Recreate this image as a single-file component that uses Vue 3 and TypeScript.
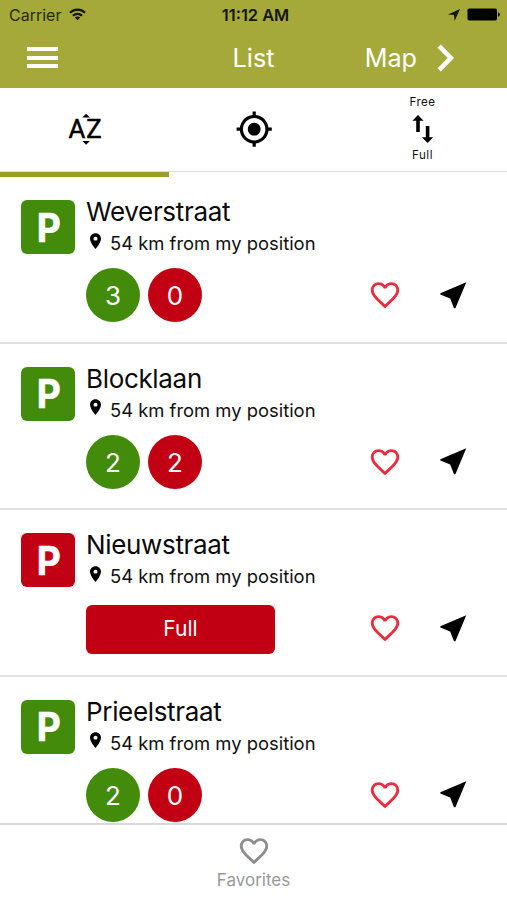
<script setup lang="ts">
interface Parking {
  name: string
  distance: string
  free: number
  taken: number
  full: boolean
}

const distance = '54 km from my position'

const parkings: Parking[] = [
  { name: 'Weverstraat', distance, free: 3, taken: 0, full: false },
  { name: 'Blocklaan', distance, free: 2, taken: 2, full: false },
  { name: 'Nieuwstraat', distance, free: 0, taken: 2, full: true },
  { name: 'Prieelstraat', distance, free: 2, taken: 0, full: false },
]

const heartPath =
  'M16.5 3c-1.74 0-3.41.81-4.5 2.09C10.91 3.81 9.24 3 7.5 3 4.42 3 2 5.42 2 8.5c0 3.78 3.4 6.86 8.55 11.54L12 21.35l1.45-1.32C18.6 15.36 22 12.28 22 8.5 22 5.42 19.58 3 16.5 3zm-4.4 15.55l-.1.1-.1-.1C7.14 14.24 4 11.39 4 8.5 4 6.5 5.5 5 7.5 5c1.54 0 3.04.99 3.57 2.36h1.87C13.46 5.99 14.96 5 16.5 5c2 0 3.5 1.5 3.5 3.5 0 2.89-3.14 5.74-7.9 10.05z'
const arrowPath = 'M21 3L3 10.53v.98l6.84 2.65L12.48 21h.98L21 3z'
</script>

<template>
  <div class="screen">
    <header class="header">
      <div class="status">
        <div class="network">
          <span>Carrier</span>
          <svg class="wifi" viewBox="0 0 17 13" aria-hidden="true">
            <g fill="none" stroke="#15150a" stroke-width="2.2">
              <path d="M1 4.7C5.2 0.6 11.8 0.6 16 4.7" />
              <path d="M3.9 7.7C6.5 5.2 10.5 5.2 13.1 7.7" />
            </g>
            <path d="M8.5 12.3L5.8 9.6C7.3 8.2 9.7 8.2 11.2 9.6z" fill="#15150a" />
          </svg>
        </div>
        <span class="clock">11:12 AM</span>
        <div class="power">
          <svg class="locate" viewBox="0 0 12 12" aria-hidden="true">
            <path d="M12 0L0 5.6L6 6L6.6 12z" fill="#15150a" />
          </svg>
          <svg class="battery" viewBox="0 0 33 13" aria-hidden="true">
            <rect x="0.5" y="0.5" width="29.5" height="12" rx="1.8" fill="#050500" />
            <path d="M31 4.5h.6q1.2.6 1.2 2t-1.2 2H31z" fill="#050500" />
          </svg>
        </div>
      </div>
      <nav class="navbar">
        <div class="menu"><i /><i /><i /></div>
        <span class="title">List</span>
        <div class="map">
          <span>Map</span>
          <svg class="chevron" viewBox="0 0 18 28" aria-hidden="true">
            <path d="M2.2 2.2L13.8 14L2.2 25.8" fill="none" stroke="#fff" stroke-width="4.6" />
          </svg>
        </div>
      </nav>
    </header>

    <div class="tabs">
      <div class="tab active">
        <svg class="tab-icon" viewBox="0 0 24 24">
          <path d="M14.94 4.66h-4.72l2.36-2.36zM10.25 19.37h4.66l-2.33 2.33z" />
          <text class="letters" x="1.5" y="17.73">A</text>
          <text class="letters" x="12.7" y="17.73">Z</text>
        </svg>
      </div>
      <div class="tab">
        <svg class="tab-icon" viewBox="0 0 24 24" aria-hidden="true">
          <path
            d="M12 8c-2.21 0-4 1.79-4 4s1.79 4 4 4 4-1.79 4-4-1.79-4-4-4zm8.94 3c-.46-4.17-3.77-7.48-7.94-7.94V1h-2v2.06C6.83 3.52 3.52 6.83 3.06 11H1v2h2.06c.46 4.17 3.77 7.48 7.94 7.94V23h2v-2.06c4.17-.46 7.48-3.77 7.94-7.94H23v-2h-2.06zM12 19c-3.87 0-7-3.13-7-7s3.13-7 7-7 7 3.13 7 7-3.13 7-7 7z"
          />
        </svg>
      </div>
      <div class="tab stacked">
        <span>Free</span>
        <svg class="swap" viewBox="0 0 22 28" aria-hidden="true">
          <path d="M6 0L0.4 5.8H4.2V17H7.8V5.8H11.6z" />
          <path d="M15.6 28L10 22.2H13.8V11H17.4V22.2H21.2z" />
        </svg>
        <span>Full</span>
      </div>
    </div>

    <main class="list">
      <article v-for="p in parkings" :key="p.name" class="row">
        <div class="badge" :class="{ red: p.full }"><span>P</span></div>
        <div class="body">
          <h2 class="name">{{ p.name }}</h2>
          <div class="distance">
            <svg class="pin" viewBox="5 2 14 20" aria-hidden="true">
              <path
                d="M12 2C8.13 2 5 5.13 5 9c0 5.25 7 13 7 13s7-7.75 7-13c0-3.87-3.13-7-7-7zm0 9.5c-1.38 0-2.5-1.12-2.5-2.5s1.12-2.5 2.5-2.5 2.5 1.12 2.5 2.5-1.12 2.5-2.5 2.5z"
              />
            </svg>
            <span>{{ p.distance }}</span>
          </div>
          <div class="actions">
            <div v-if="p.full" class="full">Full</div>
            <div v-else class="counts">
              <span class="count">{{ p.free }}</span>
              <span class="count red">{{ p.taken }}</span>
            </div>
            <svg class="heart" viewBox="0 0 24 24" aria-hidden="true"><path :d="heartPath" /></svg>
            <svg class="go" viewBox="0 0 24 24" aria-hidden="true"><path :d="arrowPath" /></svg>
          </div>
        </div>
      </article>
    </main>

    <footer class="footer">
      <svg class="heart" viewBox="0 0 24 24" aria-hidden="true"><path :d="heartPath" /></svg>
      <span>Favorites</span>
    </footer>
  </div>
</template>

<style>
body {
  margin: 0;
  background: #fff;
}
</style>

<style scoped>
.screen {
  display: flex;
  flex-direction: column;
  width: 507px;
  height: 900px;
  overflow: hidden;
  background: #fff;
  color: #111;
  font-family: Inter, 'Liberation Sans', sans-serif;
}
svg {
  display: block;
  flex: none;
}
.header {
  flex: none;
  height: 87.5px;
  background: #a5a939;
}
.status {
  display: grid;
  grid-template-columns: 1fr auto 1fr;
  align-items: center;
  height: 30px;
  padding: 0 7px 0 9px;
  color: #15150a;
  font-size: 16px;
}
.network {
  display: flex;
  align-items: center;
  gap: 8px;
  margin-top: -1px;
  color: #2a2b0d;
}
.wifi {
  width: 17px;
  height: 13px;
}
.clock {
  padding-left: 2px;
  font-size: 16.4px;
  font-weight: 600;
}
.power {
  display: flex;
  align-items: center;
  justify-content: flex-end;
  gap: 7.5px;
  margin-top: -1px;
}
.locate {
  width: 12px;
  height: 12px;
}
.battery {
  width: 33px;
  height: 13px;
}
.navbar {
  display: grid;
  grid-template-columns: 1fr auto 1fr;
  align-items: center;
  height: 55px;
  padding: 0 27px;
  color: #fff;
  font-size: 25.2px;
}
.menu {
  display: flex;
  flex-direction: column;
  gap: 4.5px;
  width: 31px;
}
.menu i {
  height: 4px;
  background: #fff;
}
.map {
  display: flex;
  align-items: center;
  justify-content: flex-end;
  gap: 20px;
  padding-right: 25px;
}
.chevron {
  width: 18px;
  height: 28px;
}
.tabs {
  display: grid;
  flex: none;
  grid-template-columns: repeat(3, 1fr);
  box-sizing: border-box;
  height: 84.5px;
  border-bottom: 1.5px solid #dedede;
}
.tab {
  display: flex;
  align-items: center;
  justify-content: center;
  padding-left: 1px;
}
.active {
  position: relative;
}
.active::after {
  position: absolute;
  bottom: -6px;
  left: 0;
  width: 100%;
  height: 5px;
  background: #999e24;
  content: '';
}
.tab-icon {
  width: 38.4px;
  height: 38.4px;
}
.letters {
  stroke: #000;
  stroke-width: 0.3px;
  font-family: Roboto, sans-serif;
  font-size: 16.1px;
  font-weight: 400;
}
.stacked {
  flex-direction: column;
  gap: 5px;
  padding-left: 0;
  font-size: 11.6px;
  letter-spacing: 0.5px;
  line-height: 15px;
}
.swap {
  width: 22px;
  height: 28px;
}
.list {
  flex: 1;
  min-height: 0;
  padding-top: 5px;
  overflow: hidden;
}
.row {
  display: flex;
  gap: 11px;
  box-sizing: border-box;
  height: 166.5px;
  padding: 23px 41px 0 21px;
  border-bottom: 2px solid #e0e0e0;
}
.badge {
  display: flex;
  flex: none;
  align-items: center;
  justify-content: center;
  box-sizing: border-box;
  width: 54px;
  height: 54px;
  padding-left: 1px;
  border-radius: 6px;
  background: #438b0b;
  color: #fff;
  font-size: 39.5px;
  font-weight: 700;
  line-height: 54px;
  -webkit-text-stroke: 0.6px #fff;
}
.badge span {
  padding-top: 1px;
  transform: scaleX(0.94);
}
.red {
  background: #c20014;
}
.body {
  flex: 1;
  min-width: 0;
}
.name {
  margin: 0;
  height: 30px;
  margin-top: -3px;
  color: #0a0a0a;
  font-size: 26px;
  font-weight: 400;
  letter-spacing: -0.33px;
  line-height: 30px;
}
.distance {
  display: flex;
  gap: 9px;
  height: 28px;
  margin-top: 3px;
  padding-left: 4px;
  font-size: 18.4px;
  line-height: 27px;
}
.pin {
  width: 11px;
  height: 16px;
  margin-top: 2.5px;
}
.actions {
  display: flex;
  align-items: center;
  height: 54px;
  margin-top: 10px;
}
.counts {
  display: flex;
  gap: 8px;
}
.count {
  width: 54px;
  height: 54px;
  border-radius: 50%;
  background: #438b0b;
  color: #fff;
  font-size: 26px;
  line-height: 55px;
  text-align: center;
}
.count.red {
  background: #c20014;
}
.full {
  width: 189px;
  height: 48.5px;
  margin-top: 3px;
  border-radius: 6px;
  background: #c20014;
  color: #fff;
  font-size: 21px;
  line-height: 48px;
  text-align: center;
}
.heart {
  width: 34px;
  height: 34px;
}
.actions .heart {
  margin-left: auto;
  fill: #ec2c3e;
}
.go {
  width: 34.6px;
  height: 34.6px;
  margin-left: 33.5px;
  margin-right: -4.5px;
}
.footer {
  display: flex;
  flex: none;
  flex-direction: column;
  align-items: center;
  box-sizing: border-box;
  height: 77px;
  padding-top: 9px;
  border-top: 2px solid #d8d8d8;
  background: #fff;
  color: #999;
  font-size: 17px;
  line-height: 24px;
}
.footer .heart {
  fill: #8e8e8e;
}
</style>
